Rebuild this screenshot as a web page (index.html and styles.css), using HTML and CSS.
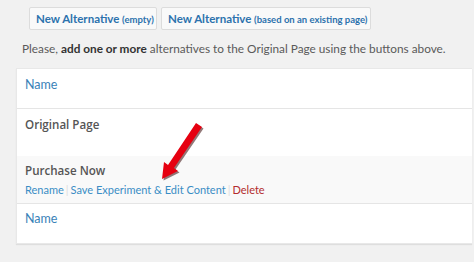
FILE: index.html
```html
<!DOCTYPE html>
<html>
<head>
<meta charset="utf-8">
<link rel="stylesheet" href="styles.css">
</head>
<body>
<div class="page">
  <div class="buttons">
    <button class="btn btn-empty">New Alternative <small>(empty)</small></button>
    <button class="btn btn-existing">New Alternative <small>(based on an existing page)</small></button>
  </div>
  <p class="hint">Please, <strong>add one or more</strong> alternatives to the Original Page using the buttons above.</p>
  <div class="table">
    <div class="row head">Name</div>
    <div class="row orig"><span class="title">Original Page</span></div>
    <div class="row alt">
      <span class="title">Purchase Now</span>
      <div class="actions">
        <a class="link">Rename</a><span class="sep">|</span><a class="link">Save Experiment &amp; Edit Content</a><span class="sep">|</span><a class="link del">Delete</a>
      </div>
    </div>
    <div class="row foot">Name</div>
  </div>
  <svg class="arrow" width="60" height="70" viewBox="0 0 60 70">
    <g transform="translate(1.5,1.5)" fill="#3a0a0a" opacity="0.55">
      <path d="M39 3 L45 7 L17 48 L21 51 L5 59 L7 42 L11 45 Z"/>
    </g>
    <path d="M39 3 L45 7 L17 48 L21 51 L5 59 L7 42 L11 45 Z" fill="#e60010"/>
  </svg>
</div>
</body>
</html>
```
FILE: styles.css
```css
html, body {
  margin: 0;
  padding: 0;
  background: #f1f1f1;
}
body {
  font-family: Lato, "Open Sans", sans-serif;
  font-size: 12px;
  color: #555;
}
.page {
  position: relative;
  width: 474px;
  height: 262px;
  overflow: hidden;
}
.buttons {
  display: flex;
  gap: 4px;
  padding: 7px 0 0 29px;
}
.btn {
  height: 23px;
  box-sizing: border-box;
  border: 1px solid #dcdcdc;
  background: #f9f9f9;
  border-radius: 2px;
  font-family: inherit;
  font-size: 11.5px;
  font-weight: 700;
  color: #2c72ad;
  padding: 0 6px;
  line-height: 21px;
  white-space: nowrap;
  text-align: center;
}
.btn small {
  font-size: 9.5px;
  font-weight: 700;
}
.btn-empty { width: 128px; }
.btn-existing { width: 210px; }
.hint {
  margin: 9px 0 0 22px;
  line-height: 20px;
  font-size: 11.8px;
  color: #5a5a5a;
}
.hint strong {
  font-weight: 700;
  color: #333;
}
.table {
  margin: 9px 0 0 16px;
  width: 456px;
  background: #fff;
  box-shadow: 0 1px 1px rgba(0,0,0,0.08);
  border: 1px solid #e8e8e8;
  border-right: none;
  box-sizing: border-box;
}
.row {
  box-sizing: border-box;
  padding: 6px 8px 0 8px;
  line-height: 20px;
  font-size: 12.5px;
}
.head {
  height: 40px;
  color: #3a82b8;
  border-bottom: 1px solid #e5e5e5;
}
.orig { height: 47px; }
.alt {
  height: 48px;
  background: #f9f9f9;
  border-bottom: 1px solid #e5e5e5;
  padding-top: 5px;
}
.title {
  font-family: "Open Sans", Lato, sans-serif;
  font-size: 11.6px;
  font-weight: 600;
  color: #555;
}
.actions {
  line-height: 17px;
  font-size: 11px;
}
.link { color: #3a8dc5; }
.del { color: #b32d2e; }
.sep {
  color: #ddd;
  margin: 0 2px;
}
.foot {
  height: 39px;
  color: #3a82b8;
  padding-top: 5px;
}
.arrow {
  position: absolute;
  left: 157px;
  top: 120px;
}
```
